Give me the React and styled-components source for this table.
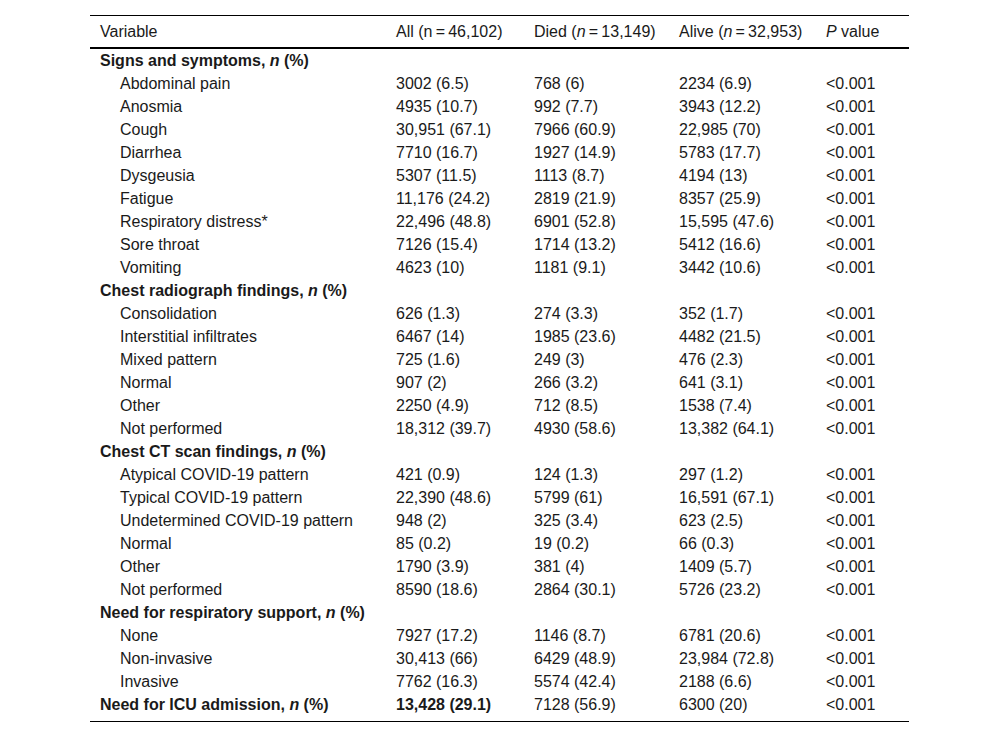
import React from "react";
import styled, { createGlobalStyle } from "styled-components";

const Global = createGlobalStyle`
  html, body { margin: 0; padding: 0; background: #fff; }
  body { font-family: "Liberation Sans", Arial, sans-serif; color: #1a1a1a; }
`;

const Page = styled.div`
  width: 1000px;
  height: 737px;
  padding-top: 15px;
  padding-left: 90px;
  box-sizing: border-box;
  display: flex;
  align-items: flex-start;
  justify-content: flex-start;
`;

const Table = styled.table`
  border-collapse: collapse;
  width: 819px;
  table-layout: fixed;
  font-size: 16px;
  border-top: 1px solid #000;
  border-bottom: 1px solid #000;
`;

const Th = styled.th`
  text-align: left;
  font-weight: normal;
  padding: 0 0 0 10px;
  height: 31px;
  line-height: 31px;
  white-space: nowrap;
  border-bottom: 2px solid #000;
`;

const Td = styled.td`
  padding: 0 0 ${(p) => (p.$last ? "5px" : "0")} ${(p) => (p.$indent ? "30px" : "10px")};
  height: 23px;
  line-height: 23px;
  white-space: nowrap;
  vertical-align: top;
  font-weight: ${(p) => (p.$bold ? "bold" : "normal")};
`;

const Cols = () => (
  <colgroup>
    <col style={{ width: 296 }} />
    <col style={{ width: 138 }} />
    <col style={{ width: 145 }} />
    <col style={{ width: 147 }} />
    <col style={{ width: 93 }} />
  </colgroup>
);

const N = () => <i>n</i>;
const T = "\u2009";

const sections = [
  {
    title: "Signs and symptoms",
    rows: [
      ["Abdominal pain", "3002 (6.5)", "768 (6)", "2234 (6.9)"],
      ["Anosmia", "4935 (10.7)", "992 (7.7)", "3943 (12.2)"],
      ["Cough", "30,951 (67.1)", "7966 (60.9)", "22,985 (70)"],
      ["Diarrhea", "7710 (16.7)", "1927 (14.9)", "5783 (17.7)"],
      ["Dysgeusia", "5307 (11.5)", "1113 (8.7)", "4194 (13)"],
      ["Fatigue", "11,176 (24.2)", "2819 (21.9)", "8357 (25.9)"],
      ["Respiratory distress*", "22,496 (48.8)", "6901 (52.8)", "15,595 (47.6)"],
      ["Sore throat", "7126 (15.4)", "1714 (13.2)", "5412 (16.6)"],
      ["Vomiting", "4623 (10)", "1181 (9.1)", "3442 (10.6)"],
    ],
  },
  {
    title: "Chest radiograph findings",
    rows: [
      ["Consolidation", "626 (1.3)", "274 (3.3)", "352 (1.7)"],
      ["Interstitial infiltrates", "6467 (14)", "1985 (23.6)", "4482 (21.5)"],
      ["Mixed pattern", "725 (1.6)", "249 (3)", "476 (2.3)"],
      ["Normal", "907 (2)", "266 (3.2)", "641 (3.1)"],
      ["Other", "2250 (4.9)", "712 (8.5)", "1538 (7.4)"],
      ["Not performed", "18,312 (39.7)", "4930 (58.6)", "13,382 (64.1)"],
    ],
  },
  {
    title: "Chest CT scan findings",
    rows: [
      ["Atypical COVID-19 pattern", "421 (0.9)", "124 (1.3)", "297 (1.2)"],
      ["Typical COVID-19 pattern", "22,390 (48.6)", "5799 (61)", "16,591 (67.1)"],
      ["Undetermined COVID-19 pattern", "948 (2)", "325 (3.4)", "623 (2.5)"],
      ["Normal", "85 (0.2)", "19 (0.2)", "66 (0.3)"],
      ["Other", "1790 (3.9)", "381 (4)", "1409 (5.7)"],
      ["Not performed", "8590 (18.6)", "2864 (30.1)", "5726 (23.2)"],
    ],
  },
  {
    title: "Need for respiratory support",
    rows: [
      ["None", "7927 (17.2)", "1146 (8.7)", "6781 (20.6)"],
      ["Non-invasive", "30,413 (66)", "6429 (48.9)", "23,984 (72.8)"],
      ["Invasive", "7762 (16.3)", "5574 (42.4)", "2188 (6.6)"],
    ],
  },
];

export default function App() {
  return (
    <>
      <Global />
      <Page>
        <Table>
          <Cols />
          <thead>
            <tr>
              <Th>Variable</Th>
              <Th>All (n{T}={T}46,102)</Th>
              <Th>
                Died (<N />{T}={T}13,149)
              </Th>
              <Th>
                Alive (<N />{T}={T}32,953)
              </Th>
              <Th>
                <i>P</i> value
              </Th>
            </tr>
          </thead>
          <tbody>
            {sections.map((s) => (
              <React.Fragment key={s.title}>
                <tr>
                  <Td $bold>
                    {s.title}, <N /> (%)
                  </Td>
                  <Td />
                  <Td />
                  <Td />
                  <Td />
                </tr>
                {s.rows.map((r, i) => (
                  <tr key={s.title + i}>
                    <Td $indent>{r[0]}</Td>
                    <Td>{r[1]}</Td>
                    <Td>{r[2]}</Td>
                    <Td>{r[3]}</Td>
                    <Td>&lt;0.001</Td>
                  </tr>
                ))}
              </React.Fragment>
            ))}
            <tr>
              <Td $bold $last>
                Need for ICU admission, <N /> (%)
              </Td>
              <Td $bold $last>13,428 (29.1)</Td>
              <Td $last>7128 (56.9)</Td>
              <Td $last>6300 (20)</Td>
              <Td $last>&lt;0.001</Td>
            </tr>
          </tbody>
        </Table>
      </Page>
    </>
  );
}
